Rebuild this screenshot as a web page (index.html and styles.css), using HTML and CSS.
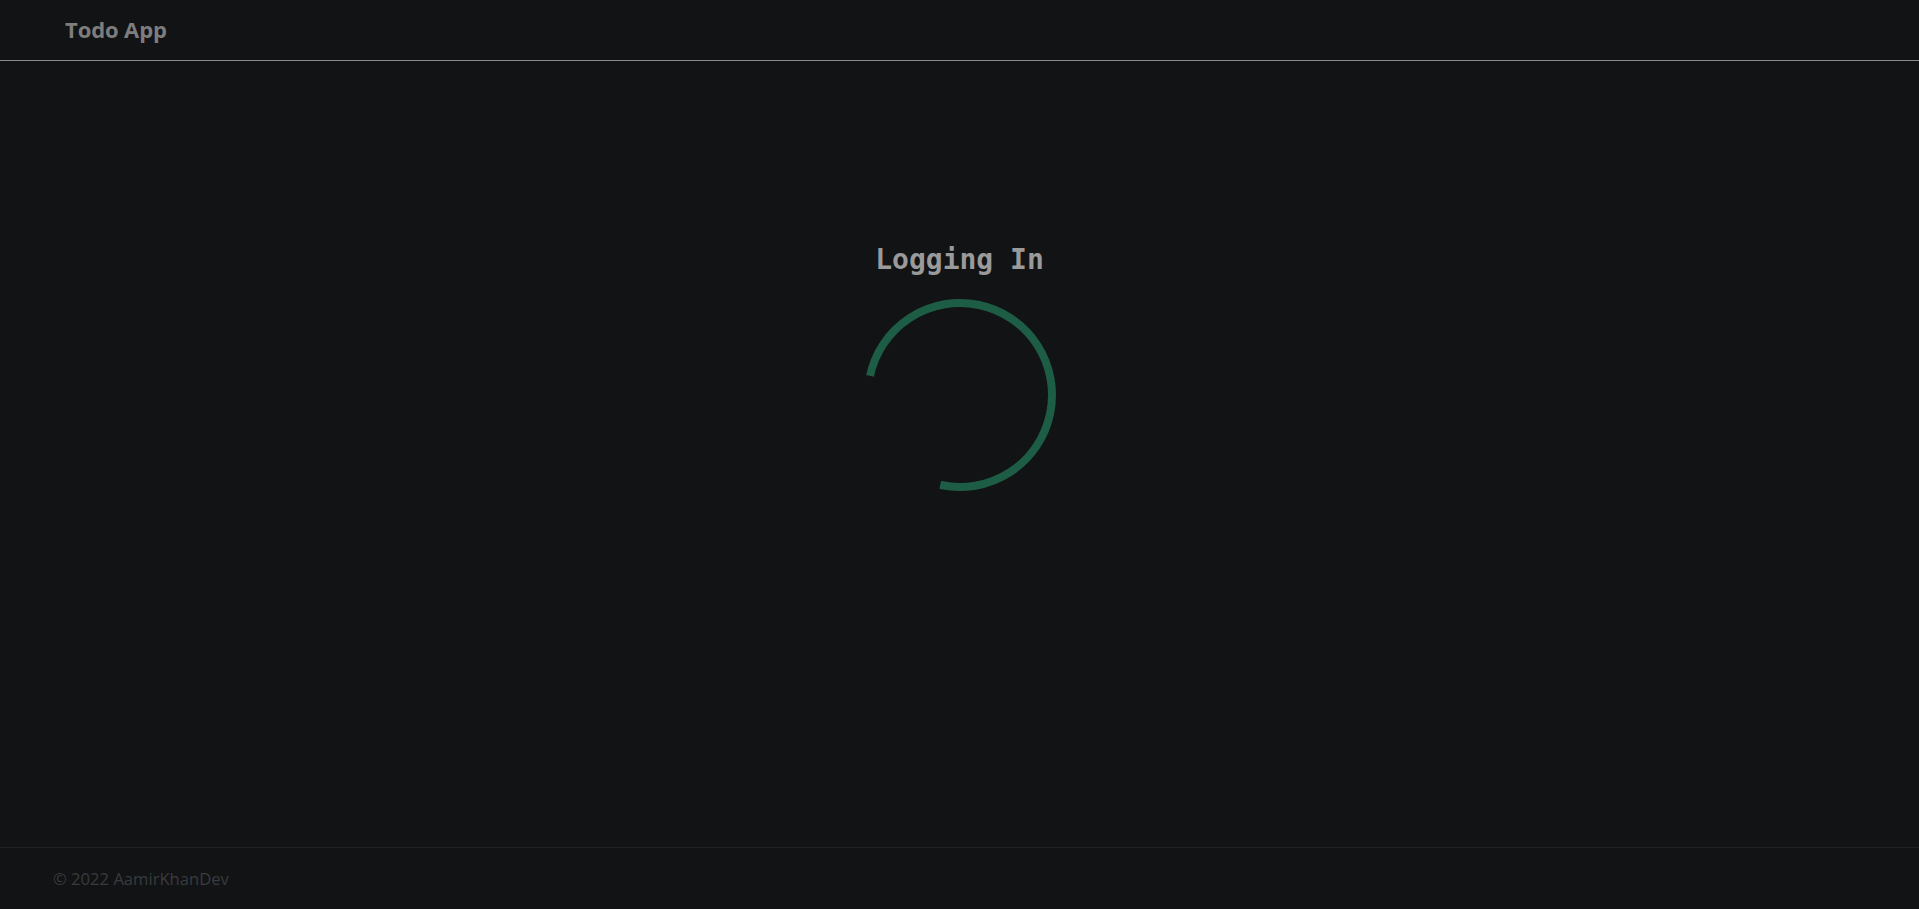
FILE: index.html
```html
<!DOCTYPE html>
<html>
<head>
<meta charset="utf-8">
<title>Todo App</title>
<link rel="stylesheet" href="styles.css">
</head>
<body>
<header class="navbar">
  <span class="brand">Todo App</span>
</header>
<main class="content">
  <div class="loading">
    <h2 class="loading-title">Logging In</h2>
    <svg class="spinner" width="200" height="200" viewBox="0 0 200 200">
      <circle cx="100" cy="100" r="92" fill="none" stroke="#1d5c45" stroke-width="8" stroke-dasharray="433.5 144.5" transform="rotate(192 100 100)"/>
    </svg>
  </div>
</main>
<footer class="footer">
  <span class="copy">© 2022 AamirKhanDev</span>
</footer>
</body>
</html>
```
FILE: styles.css
```css
* { box-sizing: border-box; }
html, body { margin: 0; padding: 0; }
body {
  background: #121315;
  min-height: 100vh;
  display: flex;
  flex-direction: column;
  font-family: "Open Sans", "Liberation Sans", sans-serif;
}
.navbar {
  height: 61px;
  border-bottom: 1px solid #8a8a8a;
  display: flex;
  align-items: center;
  padding: 0 0 2px 65px;
}
.brand {
  color: #7d7d7d;
  font-weight: 700;
  font-size: 22px;
  letter-spacing: -0.1px;
}
.content {
  flex: 1;
  display: flex;
  justify-content: center;
  padding-top: 182px;
}
.loading {
  display: flex;
  flex-direction: column;
  align-items: center;
}
.loading-title {
  margin: 0;
  font-family: "DejaVu Sans Mono", "Liberation Mono", monospace;
  font-weight: 700;
  font-size: 28px;
  line-height: 34px;
  color: #9a9a9a;
}
.spinner {
  display: block;
  margin-top: 18px;
}
.footer {
  height: 62px;
  border-top: 1px solid #202224;
  display: flex;
  align-items: center;
  padding: 0 0 0 53px;
}
.copy {
  color: #393b3e;
  font-size: 16.6px;
  font-weight: 400;
}
```
